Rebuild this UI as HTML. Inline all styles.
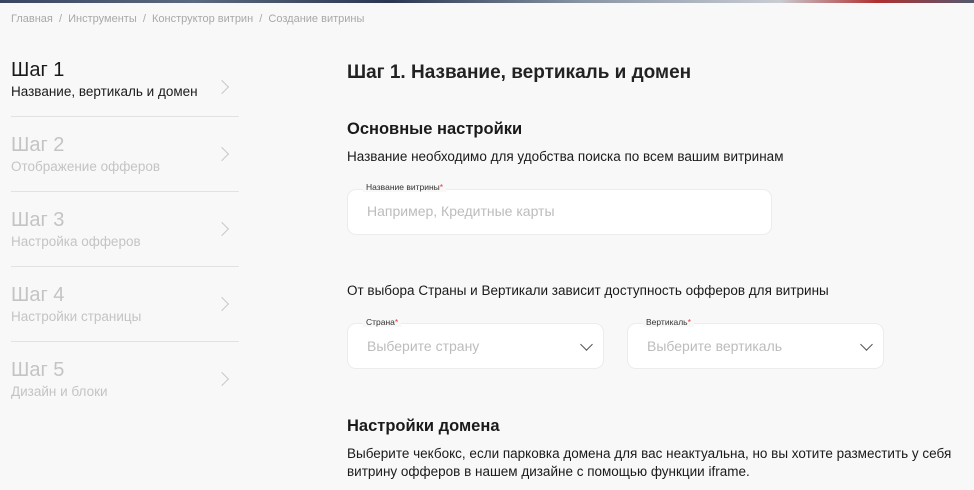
<!DOCTYPE html>
<html><head><meta charset="utf-8"><style>
*{margin:0;padding:0;box-sizing:border-box}
body{width:974px;height:490px;overflow:hidden;background:#f8f8f8;font-family:"Liberation Sans","Noto Sans CJK SC",sans-serif;color:#1a1a1a;position:relative}
.top{position:absolute;left:0;top:0;width:974px;height:3px;background:linear-gradient(90deg,#3a4560,#5a6a80 20%,#2b3550 40%,#8a95a5 60%,#c9cdd3 80%,#b03030 90%,#505a70)}
.abs{position:absolute;white-space:nowrap}
.bc{left:11px;top:13px;font-size:11px;color:#a8a8a8}
.step{position:absolute;left:11px;width:228px}
.step .t{font-size:20px;line-height:24px}
.step .s{font-size:13.5px;line-height:18px;margin-top:1px}
.step.off{color:#c4c4c4}
.div{position:absolute;left:11px;width:228px;height:1px;background:#e2e2e2}
.chev{position:absolute;left:217px;width:10px;height:10px;border-right:1.3px solid #c8c8c8;border-top:1.3px solid #c8c8c8;transform:rotate(45deg)}
.box{position:absolute;background:#fff;border:1px solid #ececec;border-radius:9px}
.lbl{position:absolute;font-size:8.5px;color:#333;background:#f8f8f8;padding:0 3px}
.lbl b{color:#e53935;font-weight:normal}
.ph{position:absolute;font-size:14px;color:#bcbcbc}
.dd{position:absolute;width:9px;height:9px;border-right:1.2px solid #555;border-bottom:1.2px solid #555;transform:rotate(45deg)}
</style></head><body>
<div class="top"></div>
<div class="abs bc">Главная &nbsp;/&nbsp; Инструменты &nbsp;/&nbsp; Конструктор витрин &nbsp;/&nbsp; Создание витрины</div>

<div class="step" style="top:58px"><div class="t">Шаг 1</div><div class="s">Название, вертикаль и домен</div></div>
<div class="chev" style="top:82px"></div>
<div class="div" style="top:116px"></div>
<div class="step off" style="top:133px"><div class="t">Шаг 2</div><div class="s">Отображение офферов</div></div>
<div class="chev" style="top:149px"></div>
<div class="div" style="top:191px"></div>
<div class="step off" style="top:208px"><div class="t">Шаг 3</div><div class="s">Настройка офферов</div></div>
<div class="chev" style="top:224px"></div>
<div class="div" style="top:266px"></div>
<div class="step off" style="top:283px"><div class="t">Шаг 4</div><div class="s">Настройки страницы</div></div>
<div class="chev" style="top:299px"></div>
<div class="div" style="top:341px"></div>
<div class="step off" style="top:358px"><div class="t">Шаг 5</div><div class="s">Дизайн и блоки</div></div>
<div class="chev" style="top:374px"></div>

<div class="abs" style="left:347px;top:62px;font-size:19px;font-weight:bold;color:#222">Шаг 1. Название, вертикаль и домен</div>
<div class="abs" style="left:347px;top:120px;font-size:16.5px;font-weight:bold">Основные настройки</div>
<div class="abs" style="left:347px;top:149px;font-size:13.5px">Название необходимо для удобства поиска по всем вашим витринам</div>

<div class="box" style="left:347px;top:189px;width:425px;height:46px"></div>
<div class="lbl" style="left:363px;top:182px">Название витрины<b>*</b></div>
<div class="ph" style="left:367px;top:203px">Например, Кредитные карты</div>

<div class="abs" style="left:347px;top:283px;font-size:13.5px">От выбора Страны и Вертикали зависит доступность офферов для витрины</div>

<div class="box" style="left:347px;top:323px;width:257px;height:46px"></div>
<div class="lbl" style="left:363px;top:317px">Страна<b>*</b></div>
<div class="ph" style="left:367px;top:338px">Выберите страну</div>
<div class="dd" style="left:582px;top:340px"></div>

<div class="box" style="left:627px;top:323px;width:257px;height:46px"></div>
<div class="lbl" style="left:643px;top:317px">Вертикаль<b>*</b></div>
<div class="ph" style="left:647px;top:338px">Выберите вертикаль</div>
<div class="dd" style="left:862px;top:340px"></div>

<div class="abs" style="left:347px;top:417px;font-size:16.5px;font-weight:bold">Настройки домена</div>
<div class="abs" style="left:347px;top:445px;font-size:13.5px;line-height:18px">Выберите чекбокс, если парковка домена для вас неактуальна, но вы хотите разместить у себя<br>витрину офферов в нашем дизайне с помощью функции iframe.</div>
</body></html>
